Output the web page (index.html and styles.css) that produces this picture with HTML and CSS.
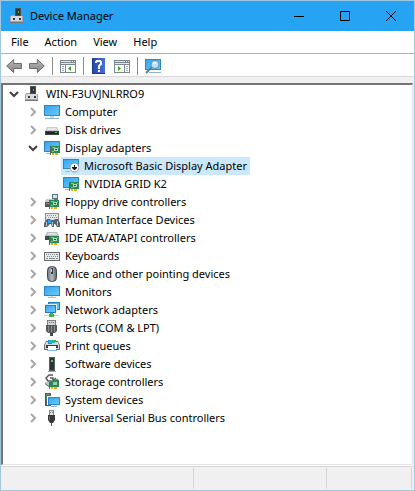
FILE: index.html
```
<!DOCTYPE html>
<html lang="en">
<head>
<meta charset="utf-8">
<title>Device Manager</title>
<link rel="stylesheet" href="styles.css">
</head>
<body>
<svg class="sprite" aria-hidden="true">
  <defs>
    <linearGradient id="screen" x1="0" y1="0" x2="1" y2="1">
      <stop offset="0" stop-color="#35a6ee"/><stop offset="1" stop-color="#6cc8fb"/>
    </linearGradient>
    <linearGradient id="arrow" x1="0" y1="0" x2="0" y2="1">
      <stop offset="0" stop-color="#b8b8b8"/><stop offset="1" stop-color="#858585"/>
    </linearGradient>
    <linearGradient id="helpblue" x1="0" y1="0" x2="1" y2="0">
      <stop offset="0" stop-color="#2448a8"/><stop offset="1" stop-color="#4a74d8"/>
    </linearGradient>
    <linearGradient id="mousegray" x1="0" y1="0" x2="1" y2="0">
      <stop offset="0" stop-color="#6d757e"/><stop offset=".5" stop-color="#b5bcc4"/><stop offset="1" stop-color="#59616a"/>
    </linearGradient>
  </defs>
  <symbol id="board" viewBox="0 0 10 9">
    <path fill="#5d5f60" d="M0 0h1v9H0z"/>
    <path fill="#2a8a52" d="M1 0h9v7H1z"/>
    <path fill="#7fc79b" d="M2 1h3v1H2zM8 1h1v1H8zM2 5h2v1H2z"/>
    <path fill="#b5ddc0" d="M4 2h4v3H4z"/>
    <path fill="#17563a" d="M5 3h2v1H5z"/>
    <path fill="#f0a51d" d="M2 7h2v2H2zM5 7h3v2H5z"/>
  </symbol>
  <symbol id="tower" viewBox="0 0 16 16">
    <path fill="#4b4f52" d="M5 0h6v8H5z"/>
    <path fill="#303437" d="M6 1h4v6H6z"/>
    <path fill="#32cc3c" d="M8 3h1v2H8z"/>
    <path fill="#a4a7aa" d="M1 7h4v1H1zM0 8h13v7H0z"/>
    <path fill="#d6d8da" d="M1 8h11v5H1z"/>
    <path fill="#74777a" d="M0 14h13v1H0z"/>
    <path fill="#34383a" d="M3 10h2v2H3zM9 10h2v2H9z"/>
  </symbol>
  <symbol id="computer" viewBox="0 0 16 16">
    <path fill="#2789c8" d="M0 1h16v11H0z"/>
    <path fill="url(#screen)" d="M1 2h14v9H1z"/>
    <path fill="#c3dceb" d="M6 12h4v2H6z"/>
    <path fill="#8fb3c9" d="M1 14h14v1H1z"/>
  </symbol>
  <symbol id="disk" viewBox="0 0 16 16">
    <path fill="#c9cbcc" d="M3 5h10l2 4H1z"/>
    <path fill="#e6e7e8" d="M4 6h8l1 2H3z"/>
    <path fill="#3e4245" d="M1 9h14v4H1z"/>
    <path fill="#25292b" d="M2 10h12v2H2z"/>
    <path fill="#33d13d" d="M11 10h2v1h-2z"/>
  </symbol>
  <symbol id="display" viewBox="0 0 16 16">
    <path fill="#2789c8" d="M0 1h16v11H0z"/>
    <path fill="url(#screen)" d="M1 2h14v9H1z"/>
    <path fill="#9bbed2" d="M2 13h4v1H2z"/>
    <use href="#board" x="6" y="6" width="10" height="9"/>
  </symbol>
  <symbol id="basic" viewBox="0 0 16 16">
    <path fill="#2789c8" d="M0 1h16v10H0z"/>
    <path fill="url(#screen)" d="M1 2h14v8H1z"/>
    <path fill="#9bbed2" d="M2 13h5v1H2z"/>
    <circle cx="11.500" cy="9.500" r="4.500" fill="#fff" stroke="#8d9296"/>
    <path fill="#17191a" d="M11 7h1v2h2v1l-2 2h-1l-2-2V9h2z"/>
  </symbol>
  <symbol id="floppy" viewBox="0 0 16 16">
    <path fill="#5d7688" d="M8 0h6v6H8z"/>
    <path fill="#c7e5f5" d="M9 1h4v3H9z"/>
    <path fill="#c5c7c9" d="M2 5h8v3H1z"/>
    <path fill="#51565a" d="M1 8h9v5H1z"/>
    <path fill="#8f9498" d="M2 9h4v1H2z"/>
    <use href="#board" x="5" y="6" width="10" height="9"/>
  </symbol>
  <symbol id="hid" viewBox="0 0 16 16">
    <path fill="#8b8f92" d="M1 1h14v8H1z"/>
    <path fill="#e4e5e6" d="M2 2h12v6H2z"/>
    <path fill="#8d9194" d="M3 3h1v1H3zM5 3h1v1H5zM7 3h1v1H7zM9 3h1v1H9zM11 3h1v1h-1zM4 5h1v1H4zM6 5h1v1H6zM8 5h1v1H8zM10 5h1v1h-1zM12 5h1v1h-1z"/>
    <path fill="#53626e" d="M3 7h3l1 1h3l1-1h3l2 4v4h-3l-2-3h-1v3H8l-1-3H6l-3 3H0v-4z"/>
    <path fill="#b5c2cc" d="M2 10h1v4H2zM8 10h1v4H8zM13 9h1v5h-1z"/>
    <path fill="#3c9ddd" d="M4 8h3v3H4z"/>
  </symbol>
  <symbol id="ide" viewBox="0 0 16 16">
    <path fill="#b9bcbe" d="M3 2h10l2 4H1z"/>
    <path fill="#dddfe0" d="M4 3h8l1 2H3z"/>
    <path fill="#44494c" d="M1 6h13v4H1z"/>
    <use href="#board" x="5" y="6" width="10" height="9"/>
  </symbol>
  <symbol id="keyboard" viewBox="0 0 16 16">
    <path fill="#676b6e" d="M0 4h16v9H0z"/>
    <path fill="#e7e8e9" d="M1 5h14v7H1z"/>
    <path fill="#888c8f" d="M2 6h1v1H2zM4 6h1v1H4zM6 6h1v1H6zM8 6h1v1H8zM10 6h1v1h-1zM12 6h2v1h-2zM3 8h1v1H3zM5 8h1v1H5zM7 8h1v1H7zM9 8h1v1H9zM11 8h1v1h-1zM13 8h1v1h-1zM2 10h2v1H2zM5 10h6v1H5zM12 10h2v1h-2z"/>
  </symbol>
  <symbol id="mouse" viewBox="0 0 16 16">
    <rect x="3.500" y=".5" width="9" height="15" rx="4" fill="url(#mousegray)" stroke="#3f464d"/>
    <path fill="#353c43" d="M7 2h2v6H7z"/>
    <path fill="#cfd5da" d="M7 3h1v3H7z"/>
  </symbol>
  <symbol id="monitor" viewBox="0 0 16 16">
    <path fill="#2789c8" d="M0 2h16v10H0z"/>
    <path fill="url(#screen)" d="M1 3h14v8H1z"/>
    <path fill="#c3dceb" d="M7 12h2v1H7z"/>
    <path fill="#a9c6d7" d="M4 13h8v1H4z"/>
  </symbol>
  <symbol id="network" viewBox="0 0 16 16">
    <path fill="#2080bd" d="M4 0h12v8H4z"/>
    <path fill="url(#screen)" d="M5 1h10v6H5z"/>
    <path fill="#d8eefa" d="M1 2h12v8H1z"/>
    <path fill="#2080bd" d="M1 3h11v8H1z"/>
    <path fill="url(#screen)" d="M2 4h9v6H2z"/>
    <path fill="#bcd9c3" d="M0 13h15v1H0z"/>
    <path fill="#39b64a" d="M6 11h3v1h1v3H5v-3h1z"/>
  </symbol>
  <symbol id="port" viewBox="0 0 16 16">
    <path fill="#7c7f81" d="M3 0h9v5H3z"/>
    <path fill="#d2d4d5" d="M4 1h7v4H4z"/>
    <path fill="#686c6e" d="M5 2h1v1H5zM7 2h1v1H7zM9 2h1v1H9z"/>
    <path fill="#55595c" d="M2 5h11v6l-2 2H4l-2-2z"/>
    <path fill="#8b8f92" d="M4 6h1v6H4zM7 6h1v6H7zM10 6h1v6h-1z"/>
    <path fill="#45494b" d="M6 13h3v3H6z"/>
  </symbol>
  <symbol id="printer" viewBox="0 0 16 16">
    <path fill="#6c7174" d="M2 3h12l2 4v5H0V7z"/>
    <path fill="#d5d7d8" d="M2 4h12l1 3v4H1V7z"/>
    <path fill="#2390db" d="M4 2h4v4H4z"/>
    <path fill="#1fb7e1" d="M5 2h6v3H5z"/>
    <path fill="#29ba51" d="M8 2h4v2H8z"/>
    <path fill="#3a3e41" d="M2 7h12v3H2z"/>
    <path fill="#fff" d="M4 8h8v5H4z"/>
    <path fill="#7dbbe2" d="M3 12h10v1H3z"/>
  </symbol>
  <symbol id="software" viewBox="0 0 16 16">
    <path fill="#5b5f62" d="M5 1h6v14H5z"/>
    <path fill="#303437" d="M6 2h4v12H6z"/>
    <path fill="#2fe03a" d="M7 4h2v2H7z"/>
    <path fill="#a2a5a7" d="M4 15h8v1H4z"/>
  </symbol>
  <symbol id="storage" viewBox="0 0 16 16">
    <path fill="none" stroke="#54595c" stroke-width="1.500" d="M9 1H5L2 4l2 3h4M6 4h3v3l3-3"/>
    <path fill="#c5c8ca" d="M1 8h5v4H3z"/>
    <path fill="#54595c" d="M1 9l4 3v1L1 10z"/>
    <path fill="#2a8a52" d="M6 8l7-3 2 1v7H6z"/>
    <path fill="#9bcaae" d="M9 8h4v3H9z"/>
    <path fill="#596065" d="M5 8h1v7H5z"/>
    <path fill="#f0a51d" d="M7 13h2v2H7zM10 13h3v2h-3z"/>
  </symbol>
  <symbol id="system" viewBox="0 0 16 16">
    <path fill="#54595c" d="M1 1h6v13H1z"/>
    <path fill="#8c9194" d="M2 2h4v1H2zM2 6h4v1H2z"/>
    <path fill="#30cf3c" d="M2 4h1v1H2z"/>
    <path fill="#fff" d="M3 4h13v9H3z"/>
    <path fill="#2789c8" d="M4 5h12v8H4z"/>
    <path fill="url(#screen)" d="M5 6h10v6H5z"/>
    <path fill="#8eb4cb" d="M7 14h6v1H7z"/>
  </symbol>
  <symbol id="usb" viewBox="0 0 16 16">
    <path fill="#85898b" d="M5 0h5v5H5z"/>
    <path fill="#e0e1e2" d="M6 1h3v4H6z"/>
    <path fill="#6f7375" d="M6 2h1v1H6zM8 2h1v1H8z"/>
    <path fill="#36393b" d="M4 5h7v5l-2 3H6l-2-3z"/>
    <path fill="#686c6f" d="M5 6h1v4H5z"/>
    <path fill="#515558" d="M7 13h1v3H7z"/>
  </symbol>
</svg>

<main class="window">
  <header class="titlebar">
    <svg class="icon"><use href="#tower"/></svg>
    <h1>Device Manager</h1>
    <div class="controls">
      <button type="button" aria-label="Minimize"><svg viewBox="0 0 10 10"><path d="M0 5.500h10"/></svg></button>
      <button type="button" aria-label="Maximize"><svg viewBox="0 0 10 10"><path d="M.5.5h9v9h-9z"/></svg></button>
      <button type="button" aria-label="Close"><svg viewBox="0 0 10 10"><path d="M0 0l10 10M10 0L0 10"/></svg></button>
    </div>
  </header>

  <nav class="menubar">
    <button type="button">File</button>
    <button type="button">Action</button>
    <button type="button">View</button>
    <button type="button">Help</button>
  </nav>

  <div class="toolbar" role="toolbar" aria-label="Tools">
    <button type="button" aria-label="Back"><svg viewBox="0 0 16 16"><path fill="url(#arrow)" stroke="#6c6c6c" d="M.7 8l7-6.500v4h7.800v5H7.700v4z"/></svg></button>
    <button type="button" aria-label="Forward"><svg viewBox="0 0 16 16"><path fill="url(#arrow)" stroke="#6c6c6c" d="M15.300 8l-7-6.500v4H.5v5h7.800v4z"/></svg></button>
    <span class="divider"></span>
    <button type="button" aria-label="Show or hide console tree"><svg viewBox="0 0 16 16"><path fill="#7c8790" d="M0 2h16v13H0z"/><path fill="#dfe4e8" d="M1 3h10v1H1zM12 3h1v1h-1zM14 3h1v1h-1zM1 5h14v1H1z"/><path fill="#fff" d="M1 7h4v7H1zM6 7h9v7H6z"/><path fill="#9aa4ab" d="M2 8h2v1H2zM2 10h2v1H2zM2 12h2v1H2z"/><path fill="#32aa22" d="M11 8v5l-3-2.500z"/></svg></button>
    <span class="divider"></span>
    <button type="button" aria-label="Help topics"><svg viewBox="0 0 16 16"><path fill="#1b3b91" d="M1 0h13v16H1z"/><path fill="url(#helpblue)" d="M2 0h12v15H2z"/><path fill="none" stroke="#fff" stroke-width="2" d="M5 5V4l1-1h3l1 1v2L8 8v3"/><path fill="#fff" d="M7 12h2v2H7z"/></svg></button>
    <button type="button" aria-label="Show or hide action pane"><svg viewBox="0 0 16 16"><path fill="#7c8790" d="M0 2h16v13H0z"/><path fill="#dfe4e8" d="M1 3h10v1H1zM12 3h1v1h-1zM14 3h1v1h-1zM1 5h14v1H1z"/><path fill="#fff" d="M1 7h9v7H1zM11 7h4v7h-4z"/><path fill="#9aa4ab" d="M12 8h2v1h-2zM12 10h2v1h-2zM12 12h2v1h-2z"/><path fill="#32aa22" d="M4 8v5l3-2.500z"/></svg></button>
    <span class="divider"></span>
    <button type="button" aria-label="Scan for hardware changes"><svg viewBox="0 0 16 16"><path fill="#2789c8" d="M0 1h16v11H0z"/><path fill="url(#screen)" d="M1 2h14v9H1z"/><path fill="#8fb3c9" d="M4 14h12v1H4z"/><path stroke="#667b8b" stroke-width="2" d="M7 9l-6 6"/><circle cx="10" cy="6.500" r="4" fill="#bce4fa" stroke="#6390ac"/><path fill="#e5f6ff" d="M8 4h3v2H8z"/></svg></button>
  </div>

  <section class="panel">
    <ul class="tree" role="tree" aria-label="Devices">
      <li role="treeitem" aria-expanded="true">
        <div class="row"><button type="button" class="toggle open" aria-label="Collapse"><svg viewBox="0 0 10 10"><path d="M1 3l4 4 4-4"/></svg></button><svg class="icon"><use href="#tower"/></svg><span class="label">WIN-F3UVJNLRRO9</span></div>
        <ul role="group">
          <li role="treeitem"><div class="row"><button type="button" class="toggle" aria-label="Expand"><svg viewBox="0 0 10 10"><path d="M3 1l4 4-4 4"/></svg></button><svg class="icon"><use href="#computer"/></svg><span class="label">Computer</span></div></li>
          <li role="treeitem"><div class="row"><button type="button" class="toggle" aria-label="Expand"><svg viewBox="0 0 10 10"><path d="M3 1l4 4-4 4"/></svg></button><svg class="icon"><use href="#disk"/></svg><span class="label">Disk drives</span></div></li>
          <li role="treeitem" aria-expanded="true"><div class="row"><button type="button" class="toggle open" aria-label="Collapse"><svg viewBox="0 0 10 10"><path d="M1 3l4 4 4-4"/></svg></button><svg class="icon"><use href="#display"/></svg><span class="label">Display adapters</span></div>
            <ul role="group">
              <li role="treeitem" aria-selected="true"><div class="row leaf selected"><svg class="icon"><use href="#basic"/></svg><span class="label">Microsoft Basic Display Adapter</span></div></li>
              <li role="treeitem"><div class="row leaf"><svg class="icon"><use href="#display"/></svg><span class="label">NVIDIA GRID K2</span></div></li>
            </ul>
          </li>
          <li role="treeitem"><div class="row"><button type="button" class="toggle" aria-label="Expand"><svg viewBox="0 0 10 10"><path d="M3 1l4 4-4 4"/></svg></button><svg class="icon"><use href="#floppy"/></svg><span class="label">Floppy drive controllers</span></div></li>
          <li role="treeitem"><div class="row"><button type="button" class="toggle" aria-label="Expand"><svg viewBox="0 0 10 10"><path d="M3 1l4 4-4 4"/></svg></button><svg class="icon"><use href="#hid"/></svg><span class="label">Human Interface Devices</span></div></li>
          <li role="treeitem"><div class="row"><button type="button" class="toggle" aria-label="Expand"><svg viewBox="0 0 10 10"><path d="M3 1l4 4-4 4"/></svg></button><svg class="icon"><use href="#ide"/></svg><span class="label">IDE ATA/ATAPI controllers</span></div></li>
          <li role="treeitem"><div class="row"><button type="button" class="toggle" aria-label="Expand"><svg viewBox="0 0 10 10"><path d="M3 1l4 4-4 4"/></svg></button><svg class="icon"><use href="#keyboard"/></svg><span class="label">Keyboards</span></div></li>
          <li role="treeitem"><div class="row"><button type="button" class="toggle" aria-label="Expand"><svg viewBox="0 0 10 10"><path d="M3 1l4 4-4 4"/></svg></button><svg class="icon"><use href="#mouse"/></svg><span class="label">Mice and other pointing devices</span></div></li>
          <li role="treeitem"><div class="row"><button type="button" class="toggle" aria-label="Expand"><svg viewBox="0 0 10 10"><path d="M3 1l4 4-4 4"/></svg></button><svg class="icon"><use href="#monitor"/></svg><span class="label">Monitors</span></div></li>
          <li role="treeitem"><div class="row"><button type="button" class="toggle" aria-label="Expand"><svg viewBox="0 0 10 10"><path d="M3 1l4 4-4 4"/></svg></button><svg class="icon"><use href="#network"/></svg><span class="label">Network adapters</span></div></li>
          <li role="treeitem"><div class="row"><button type="button" class="toggle" aria-label="Expand"><svg viewBox="0 0 10 10"><path d="M3 1l4 4-4 4"/></svg></button><svg class="icon"><use href="#port"/></svg><span class="label">Ports (COM &amp; LPT)</span></div></li>
          <li role="treeitem"><div class="row"><button type="button" class="toggle" aria-label="Expand"><svg viewBox="0 0 10 10"><path d="M3 1l4 4-4 4"/></svg></button><svg class="icon"><use href="#printer"/></svg><span class="label">Print queues</span></div></li>
          <li role="treeitem"><div class="row"><button type="button" class="toggle" aria-label="Expand"><svg viewBox="0 0 10 10"><path d="M3 1l4 4-4 4"/></svg></button><svg class="icon"><use href="#software"/></svg><span class="label">Software devices</span></div></li>
          <li role="treeitem"><div class="row"><button type="button" class="toggle" aria-label="Expand"><svg viewBox="0 0 10 10"><path d="M3 1l4 4-4 4"/></svg></button><svg class="icon"><use href="#storage"/></svg><span class="label">Storage controllers</span></div></li>
          <li role="treeitem"><div class="row"><button type="button" class="toggle" aria-label="Expand"><svg viewBox="0 0 10 10"><path d="M3 1l4 4-4 4"/></svg></button><svg class="icon"><use href="#system"/></svg><span class="label">System devices</span></div></li>
          <li role="treeitem"><div class="row"><button type="button" class="toggle" aria-label="Expand"><svg viewBox="0 0 10 10"><path d="M3 1l4 4-4 4"/></svg></button><svg class="icon"><use href="#usb"/></svg><span class="label">Universal Serial Bus controllers</span></div></li>
        </ul>
      </li>
    </ul>
  </section>

  <footer class="statusbar">
    <span></span><span></span><span></span>
  </footer>
</main>
</body>
</html>
```
FILE: styles.css
```
* {
  box-sizing: border-box;
}

body {
  margin: 0;
  font: 11px/18px "Noto Sans", "Open Sans", sans-serif;
  color: #000;
}

button {
  padding: 0;
  border: 0;
  background: none;
  font: inherit;
  color: inherit;
}

svg {
  display: block;
}

ul {
  margin: 0;
  padding: 0;
  list-style: none;
}

.sprite {
  position: absolute;
  width: 0;
  height: 0;
}

.window {
  display: flex;
  flex-direction: column;
  min-height: 100vh;
  border: 1px solid #a0c8e2;
  background: #fff;
}

.icon {
  flex: none;
  width: 16px;
  height: 16px;
}

.titlebar {
  display: flex;
  align-items: center;
  gap: 4px;
  height: 30px;
  padding-left: 9px;
  background: #26a3f2;
}

.titlebar h1 {
  margin: 0;
  font-size: 11px;
  font-weight: 400;
}

.controls {
  display: flex;
  align-self: stretch;
  margin-left: auto;
}

.controls button {
  display: grid;
  place-items: center;
  width: 46px;
}

.controls svg {
  width: 10px;
  height: 10px;
  fill: none;
  stroke: #000;
}

.menubar {
  display: flex;
  gap: 16px;
  height: 23px;
  padding-left: 10px;
  border-bottom: 1px solid #b0b3ba;
}

.toolbar {
  display: flex;
  align-items: center;
  gap: 7px;
  height: 23px;
  padding: 2px 0 0 5px;
  border-bottom: 1px solid #d9d9d9;
}

.toolbar svg {
  width: 16px;
  height: 16px;
}

.divider {
  width: 1px;
  height: 18px;
  background: #8c8c8c;
}

.panel {
  display: flex;
  flex: 1;
  padding: 6px 1px 0 0;
  background: #f0f0f0;
}

.tree {
  flex: 1;
  border: solid;
  border-width: 2px 1px 1px 2px;
  border-color: #757575 #e3e3e3 #e3e3e3 #757575;
  padding-left: 6px;
  background: #fff;
}

.tree ul {
  padding-left: 19px;
}

.row {
  display: flex;
  align-items: center;
  width: max-content;
  height: 18px;
}

.toggle {
  width: 10px;
  height: 10px;
  margin-right: 6px;
}

.toggle svg {
  width: 10px;
  height: 10px;
  fill: none;
  stroke: #a6a6a6;
  stroke-width: 2;
}

.toggle.open svg {
  stroke: #404040;
}

.label {
  padding: 0 3px 0 5px;
}

.leaf {
  margin-left: 14px;
  padding-left: 2px;
}

.selected {
  background: #cce8ff;
}

.statusbar {
  display: grid;
  grid-template-columns: 193fr 133fr 85fr;
  height: 24px;
  margin-top: 1px;
  padding: 1px 2px 1px 0;
  border-top: 1px solid #d7d7d7;
  background: #f0f0f0;
}

.statusbar span {
  border-right: 1px solid #d7d7d7;
}
```
